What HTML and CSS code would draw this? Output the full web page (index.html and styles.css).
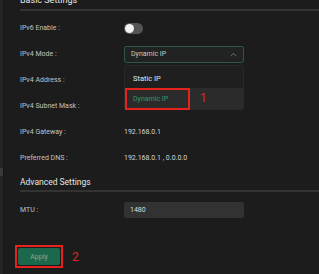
FILE: index.html
```html
<!DOCTYPE html>
<html lang="en">
  <head>
    <meta charset="UTF-8" />
    <meta name="viewport" content="width=device-width, initial-scale=1.0" />
    <title>Network Settings</title>
    <link rel="stylesheet" href="styles.css">
  </head>
  <body>
    <div class="edge"><span class="edge-mark"></span></div>
    <div class="content">
      <div class="section-title">Basic Settings</div>

      <div class="row">
        <div class="label">IPv6 Enable :</div>
        <div class="toggle"><span class="knob"></span></div>
      </div>

      <div class="row">
        <div class="label">IPv4 Mode :</div>
        <div class="select-wrap">
          <div class="select">
            <span>Dynamic IP</span>
            <svg class="chevron" width="7" height="5" viewBox="0 0 7 5">
              <path d="M0.8 4.2 L3.5 1.3 L6.2 4.2" fill="none" stroke="#6f6f6f" stroke-width="1" />
            </svg>
          </div>
          <div class="dropdown">
            <div class="option">Static IP</div>
            <div class="option active">
              <span class="mark-box">Dynamic IP</span>
              <span class="step">1</span>
            </div>
          </div>
        </div>
      </div>

      <div class="row">
        <div class="label">IPv4 Address :</div>
      </div>

      <div class="row">
        <div class="label">IPv4 Subnet Mask :</div>
      </div>

      <div class="row">
        <div class="label">IPv4 Gateway :</div>
        <div class="value">192.168.0.1</div>
      </div>

      <div class="row">
        <div class="label">Preferred DNS :</div>
        <div class="value">192.168.0.1 , 0.0.0.0</div>
      </div>

      <div class="section-title advanced">Advanced Settings</div>

      <div class="row">
        <div class="label">MTU :</div>
        <div class="input">1480</div>
      </div>

      <div class="actions">
        <div class="apply-box">
          <button class="apply">Apply</button>
        </div>
        <span class="step">2</span>
      </div>
    </div>
  </body>
</html>
```

FILE: styles.css
```css
body {
  margin: 0;
  height: 274px;
  overflow: hidden;
  display: flex;
  background-color: #1c1c1c;
  font-family: Roboto, "Noto Sans", sans-serif;
  color: #c4c4c4;
}
.edge {
  width: 3px;
  background-color: #242424;
  border-right: 1px solid #151515;
  position: relative;
}
.edge-mark {
  position: absolute;
  left: 0;
  top: 168px;
  width: 3px;
  height: 8px;
  background-color: #3a3a3a;
}
.content {
  flex: 1;
  padding-left: 16px;
}
.section-title {
  margin-top: -7px;
  height: 16px;
  line-height: 14px;
  font-size: 9px;
  color: #e6e6e6;
  border-bottom: 2px solid #333;
  margin-bottom: 4px;
}
.section-title.advanced {
  margin-top: 3px;
  margin-bottom: 5px;
  height: 16px;
  line-height: 16px;
  font-size: 8.5px;
}
.row {
  height: 26px;
  display: flex;
  align-items: center;
}
.label {
  width: 104px;
  font-size: 7px;
  color: #c2c2c2;
}
.value {
  font-size: 7px;
  color: #d8d8d8;
}
.toggle {
  width: 19px;
  height: 11px;
  border-radius: 6px;
  background-color: #555;
  display: flex;
  align-items: center;
  padding-left: 1px;
  box-sizing: border-box;
}
.knob {
  width: 9px;
  height: 9px;
  border-radius: 50%;
  background-color: #f2f2f2;
}
.select-wrap {
  position: relative;
}
.select {
  width: 120px;
  height: 17px;
  box-sizing: border-box;
  border: 1px solid #2e5645;
  border-radius: 2px;
  background-color: #202322;
  display: flex;
  align-items: center;
  justify-content: space-between;
  padding: 0 6px 0 6px;
  font-size: 7px;
  color: #c8c8c8;
}
.dropdown {
  position: absolute;
  top: 19px;
  left: 0;
  width: 120px;
  height: 45px;
  box-sizing: border-box;
  border: 1px solid #2a2a2a;
  border-radius: 2px;
  background-color: #1f1f1f;
  padding-top: 3px;
  z-index: 2;
}
.option {
  height: 19px;
  display: flex;
  align-items: center;
  padding-left: 8px;
  font-size: 7.5px;
  color: #e6e6e6;
}
.option.active {
  height: 21px;
  padding-left: 0;
  background-color: #2b2b2b;
  color: #2f9a6c;
}
.mark-box {
  width: 65px;
  height: 22px;
  box-sizing: border-box;
  border: 2px solid #e3231c;
  display: flex;
  align-items: center;
  padding-left: 6px;
  margin-top: 2px;
  font-size: 7px;
}
.step {
  color: #e0261e;
  font-size: 12px;
  margin-left: 10px;
}
.input {
  width: 120px;
  height: 16px;
  box-sizing: border-box;
  border-radius: 2px;
  background-color: #323232;
  display: flex;
  align-items: center;
  padding-left: 6px;
  font-size: 7px;
  color: #dcdcdc;
}
.actions {
  margin-top: 22px;
  margin-left: -5px;
  display: flex;
  align-items: center;
}
.apply-box {
  border: 2px solid #e3231c;
  padding: 1px;
}
.apply {
  width: 42px;
  height: 17px;
  border: none;
  border-radius: 2px;
  background-color: #1b684c;
  color: #86a99a;
  font-family: Roboto, "Noto Sans", sans-serif;
  font-size: 7px;
  padding: 0;
  display: block;
}
.actions .step {
  margin-left: 9px;
}
```
